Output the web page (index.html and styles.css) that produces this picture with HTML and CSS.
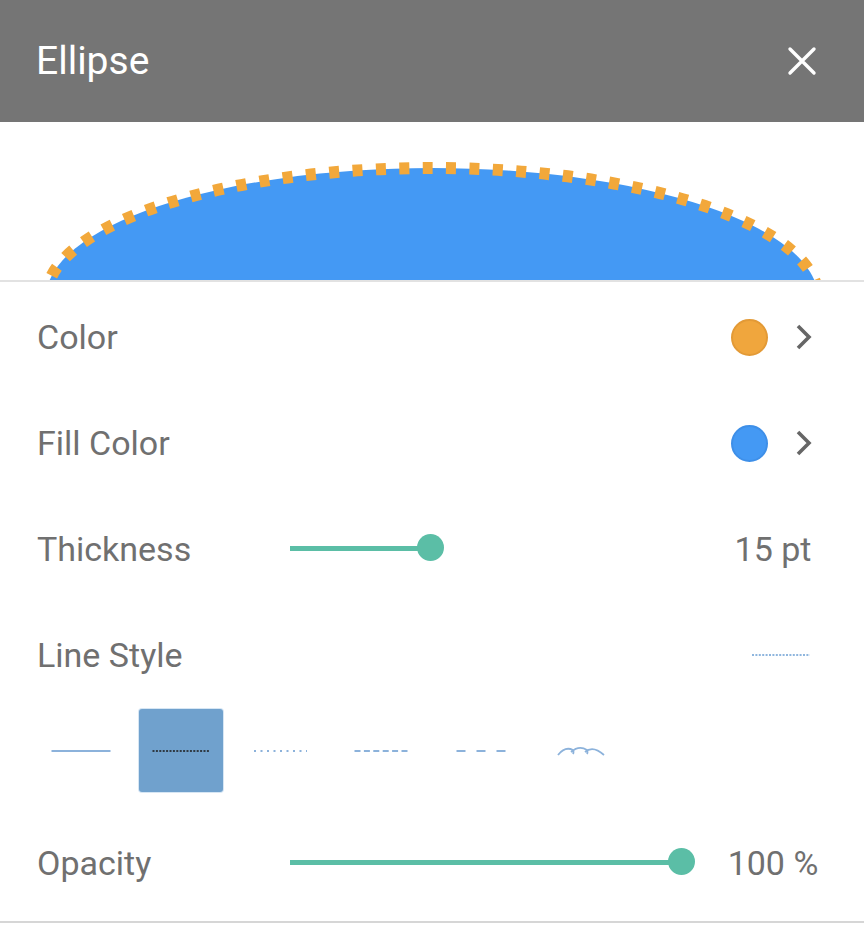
FILE: index.html
```html
<!DOCTYPE html>
<html>
<head>
<meta charset="utf-8">
<link rel="stylesheet" href="styles.css">
</head>
<body>
<div class="panel">
  <header class="header">
    <h1 class="title">Ellipse</h1>
    <svg class="close" width="30" height="30" viewBox="0 0 30 30">
      <path d="M3 3 L27 27 M27 3 L3 27" stroke="#fff" stroke-width="3.4" stroke-linecap="round"/>
    </svg>
  </header>

  <div class="preview">
    <svg width="864" height="158" viewBox="0 0 864 158">
      <ellipse cx="432" cy="176" rx="386" ry="130" fill="#4499f4"/>
      <ellipse cx="432" cy="176" rx="386" ry="130" fill="none" stroke="#f2a83b" stroke-width="12" stroke-dasharray="10 13.4" stroke-dashoffset="5"/>
    </svg>
  </div>

  <div class="list">
    <div class="row">
      <span class="label">Color</span>
      <span class="swatch swatch-orange"></span>
      <svg class="chev" width="18" height="28" viewBox="0 0 18 28"><path d="M3 3 L14 14 L3 25" fill="none" stroke="#666" stroke-width="3.6"/></svg>
    </div>
    <div class="row">
      <span class="label">Fill Color</span>
      <span class="swatch swatch-blue"></span>
      <svg class="chev" width="18" height="28" viewBox="0 0 18 28"><path d="M3 3 L14 14 L3 25" fill="none" stroke="#666" stroke-width="3.6"/></svg>
    </div>
    <div class="row">
      <span class="label label-fixed">Thickness</span>
      <div class="slider">
        <div class="track" style="width:36%"></div>
        <div class="knob" style="left:36%"></div>
      </div>
      <span class="value">15 pt</span>
    </div>
    <div class="row">
      <span class="label">Line Style</span>
      <svg class="style-preview" width="58" height="4" viewBox="0 0 58 4">
        <line x1="0" y1="2" x2="58" y2="2" stroke="#8fb6de" stroke-width="2" stroke-dasharray="2 1.4"/>
      </svg>
    </div>

    <div class="styles">
      <div class="style-item">
        <svg width="60" height="12" viewBox="0 0 60 12"><line x1="0.5" y1="6" x2="59.5" y2="6" stroke="#8cb2db" stroke-width="2.2"/></svg>
      </div>
      <div class="style-item selected">
        <svg width="60" height="12" viewBox="0 0 60 12"><line x1="1.5" y1="6" x2="58.5" y2="6" stroke="#2f3a44" stroke-width="2" stroke-dasharray="2 1.4"/></svg>
      </div>
      <div class="style-item">
        <svg width="60" height="12" viewBox="0 0 60 12"><line x1="3" y1="6" x2="56" y2="6" stroke="#8cb2db" stroke-width="2" stroke-dasharray="2 4.5"/></svg>
      </div>
      <div class="style-item">
        <svg width="60" height="12" viewBox="0 0 60 12"><line x1="3.5" y1="6" x2="56.5" y2="6" stroke="#8cb2db" stroke-width="2.2" stroke-dasharray="6 3.4"/></svg>
      </div>
      <div class="style-item">
        <svg width="60" height="12" viewBox="0 0 60 12"><line x1="5.5" y1="6" x2="54.5" y2="6" stroke="#8cb2db" stroke-width="2.2" stroke-dasharray="9 11"/></svg>
      </div>
      <div class="style-item">
        <svg width="60" height="12" viewBox="0 0 60 12"><path d="M7 10 Q14 1 22 5 Q23 7 22 9 M20 7 Q28 0 36 5 Q37 7 36 9 M34 7 Q42 0 53 10" fill="none" stroke="#8cb2db" stroke-width="1.8"/></svg>
      </div>
    </div>

    <div class="row row-last">
      <span class="label label-fixed">Opacity</span>
      <div class="slider">
        <div class="track" style="width:100%"></div>
        <div class="knob" style="left:100%"></div>
      </div>
      <span class="value">100 %</span>
    </div>
  </div>
</div>
</body>
</html>
```

FILE: styles.css
```css
html, body {
  margin: 0;
  padding: 0;
  background: #ffffff;
}

.panel {
  width: 864px;
  font-family: Roboto, "Noto Sans", "Liberation Sans", sans-serif;
}

.header {
  height: 122px;
  background: #757575;
  display: flex;
  align-items: center;
  justify-content: space-between;
  padding: 0 47px 0 36px;
}

.title {
  margin: 0;
  font-size: 39px;
  font-weight: 400;
  color: #ffffff;
  line-height: 1;
}

.close {
  display: block;
}

.preview {
  height: 158px;
  border-bottom: 2px solid #e2e2e2;
  overflow: hidden;
}

.preview svg {
  display: block;
}

.list {
  padding-top: 2px;
}

.row {
  height: 106px;
  display: flex;
  align-items: center;
  padding: 0 53px 0 37px;
}

.label {
  font-size: 34px;
  color: #707070;
  flex: 1;
}

.label-fixed {
  flex: 0 0 253px;
}

.swatch {
  width: 33px;
  height: 33px;
  border-radius: 50%;
  margin-right: 27px;
}

.swatch-orange {
  background: #f0a63d;
  border: 2px solid #e39a36;
}

.swatch-blue {
  background: #4499f4;
  border: 2px solid #3e8fe8;
}

.chev {
  display: block;
  margin-right: -2px;
}

.slider {
  position: relative;
  width: 391px;
  height: 28px;
}

.track {
  position: absolute;
  left: 0;
  top: 11px;
  height: 5px;
  background: #5bbea6;
}

.knob {
  position: absolute;
  top: -1px;
  width: 27px;
  height: 27px;
  margin-left: -13.5px;
  border-radius: 50%;
  background: #5bbea6;
}

.value {
  margin-left: auto;
  width: 100px;
  text-align: center;
  font-size: 34px;
  color: #707070;
  margin-right: -12px;
}

.style-preview {
  display: block;
  margin-right: 1px;
}

.styles {
  height: 84px;
  display: flex;
  padding-left: 31px;
  padding-top: 1px;
}

.style-item {
  width: 100px;
  display: flex;
  align-items: center;
  justify-content: center;
}

.style-item svg {
  display: block;
}

.style-item.selected {
  width: 84px;
  margin: 0 8px;
  height: 83px;
  background: #70a1cd;
  border-radius: 3px;
  box-shadow: 0 0 0 1px #d6e6f4;
}

.row-last {
  margin-top: 12px;
  height: 118px;
  border-bottom: 2px solid #d6d6d6;
  box-sizing: border-box;
}
```
